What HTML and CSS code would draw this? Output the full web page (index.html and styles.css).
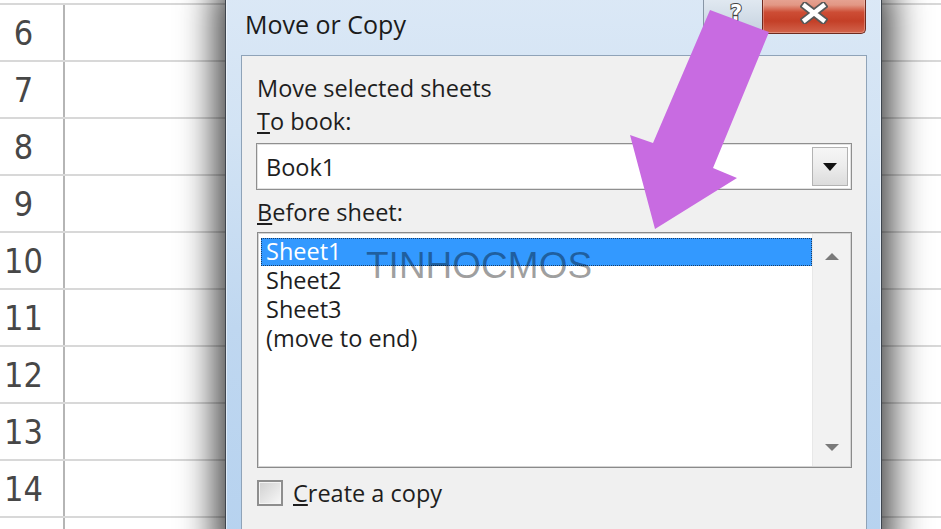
FILE: index.html
```html
<!DOCTYPE html>
<html>
<head>
<meta charset="utf-8">
<title>Move or Copy</title>
<link rel="stylesheet" href="styles.css">
</head>
<body>
<div class="sheet">
  <div class="row"><div class="hdr">6</div><div class="cells"></div></div>
  <div class="row"><div class="hdr">7</div><div class="cells"></div></div>
  <div class="row"><div class="hdr">8</div><div class="cells"></div></div>
  <div class="row"><div class="hdr">9</div><div class="cells"></div></div>
  <div class="row"><div class="hdr">10</div><div class="cells"></div></div>
  <div class="row"><div class="hdr">11</div><div class="cells"></div></div>
  <div class="row"><div class="hdr">12</div><div class="cells"></div></div>
  <div class="row"><div class="hdr">13</div><div class="cells"></div></div>
  <div class="row"><div class="hdr">14</div><div class="cells"></div></div>
  <div class="row"><div class="hdr"></div><div class="cells"></div></div>
</div>

<div class="dialog">
  <div class="titlebar">
    <span class="title">Move or Copy</span>
    <div class="caps">
      <div class="capbtn help"><span class="qmark">?</span></div>
      <div class="capbtn close">
        <svg class="xicon" width="28" height="22" viewBox="0 0 28 22">
          <path d="M5 4 L23 18 M23 4 L5 18" stroke="#585858" stroke-width="8" stroke-linecap="square"/>
          <path d="M5 4 L23 18 M23 4 L5 18" stroke="#ffffff" stroke-width="4.5" stroke-linecap="square"/>
        </svg>
      </div>
    </div>
  </div>
  <div class="client">
    <div class="label first">Move selected sheets</div>
    <div class="label lbl-book"><u>T</u>o book:</div>
    <div class="combo">
      <span class="combo-text">Book1</span>
      <span class="combo-btn">
        <svg width="16" height="10" viewBox="0 0 16 10"><path d="M1 1 H15 L8 9 Z" fill="#111"/></svg>
      </span>
    </div>
    <div class="label lbl-before"><u>B</u>efore sheet:</div>
    <div class="listbox">
      <div class="items">
        <div class="item sel">Sheet1</div>
        <div class="item">Sheet2</div>
        <div class="item">Sheet3</div>
        <div class="item">(move to end)</div>
      </div>
      <div class="vscroll">
        <svg width="16" height="9" viewBox="0 0 16 9"><path d="M1 8 L8 1 L15 8 Z" fill="#7a7a7a"/></svg>
        <svg width="16" height="9" viewBox="0 0 16 9"><path d="M1 1 L15 1 L8 8 Z" fill="#7a7a7a"/></svg>
      </div>
    </div>
    <div class="check">
      <span class="box"></span>
      <span class="check-text"><u>C</u>reate a copy</span>
    </div>
  </div>
</div>

<div class="watermark">TINHOCMOS</div>

<svg class="arrow" width="941" height="529" viewBox="0 0 941 529">
  <polygon points="710,10 769,32 713,168 737,178 655,229 630,135 653,143" fill="#c86be1"/>
</svg>
</body>
</html>
```

FILE: styles.css
```css
* { box-sizing: border-box; }
html, body { margin: 0; padding: 0; }
body {
  width: 941px;
  height: 529px;
  overflow: hidden;
  background: #ffffff;
  position: relative;
  font-family: "Open Sans", "Noto Sans", sans-serif;
  color: #1e1e1e;
}

/* spreadsheet background */
.sheet {
  margin-top: 3px;
  border-top: 2px solid #d8d8d8;
}
.row {
  display: flex;
  height: 57px;
  border-bottom: 2px solid #d8d8d8;
}
.hdr {
  width: 65px;
  flex: none;
  border-right: 2px solid #b5b5b5;
  display: flex;
  align-items: center;
  justify-content: center;
  padding-right: 16px;
  font-family: "DejaVu Sans Condensed", "DejaVu Sans", sans-serif;
  font-stretch: condensed;
  font-size: 34px;
  color: #474747;
}
.cells { flex: 1; }

/* dialog window */
.dialog {
  position: absolute;
  left: 225px;
  top: -8px;
  width: 657px;
  height: 560px;
  border: 1px solid #3e454e;
  border-radius: 6px 6px 0 0;
  background: linear-gradient(180deg, #dbe8f6 0%, #d2e3f4 25%, #bfd7f0 60%, #b6d2ef 100%);
  padding: 0 14px 0 15px;
  box-shadow: 0 0 36px 10px rgba(0, 0, 0, 0.75), inset 0 0 0 1px rgba(255, 255, 255, 0.55);
  display: flex;
  flex-direction: column;
}
.titlebar {
  height: 62px;
  flex: none;
  display: flex;
  align-items: flex-start;
}
.title {
  margin-top: 15px;
  padding-left: 4px;
  font-size: 25px;
  line-height: 32px;
  color: #1b1b1b;
}
.caps {
  margin-left: auto;
  margin-right: 1px;
  display: flex;
  align-items: flex-start;
}
.capbtn {
  display: flex;
  align-items: center;
  justify-content: center;
}
.help {
  width: 59px;
  height: 40px;
  border: 1px solid #8896a6;
  border-right: none;
  border-top: none;
  border-radius: 0 0 0 5px;
  background: linear-gradient(180deg, #e6edf4 0%, #d6e0ea 50%, #c6d2de 100%);
}
.qmark {
  font-family: "DejaVu Sans", sans-serif;
  font-weight: bold;
  font-size: 21px;
  line-height: 22px;
  color: #ffffff;
  -webkit-text-stroke: 2px #444;
  paint-order: stroke fill;
  margin-top: 0;
  margin-left: 6px;
}
.close {
  width: 104px;
  height: 41px;
  border: 1px solid #6e2a1f;
  border-top: none;
  border-radius: 0 0 5px 0;
  background: linear-gradient(180deg, #eab0a2 0%, #e29784 30%, #cd4d35 48%, #c43f27 70%, #d2644d 100%);
  box-shadow: inset 0 0 0 1px rgba(255, 220, 210, 0.35);
}
.xicon { margin-top: 0; }

/* client area */
.client {
  flex: 1;
  background: #f0f0f0;
  border: 1px solid #8fa3b8;
  padding: 17px 14px 0 14px;
  display: flex;
  flex-direction: column;
  align-items: stretch;
}
.label {
  font-size: 23.5px;
  line-height: 30px;
  padding-left: 1px;
  color: #1e1e1e;
}
.lbl-book { margin-top: 3px; }
.combo {
  margin-top: 7px;
  height: 47px;
  border: 1px solid #8f8f8f;
  box-shadow: inset 0 0 0 1px #e2e2e2;
  background: #ffffff;
  display: flex;
  align-items: center;
  padding: 3px 3px 3px 9px;
}
.combo-text {
  flex: 1;
  font-size: 23.5px;
  line-height: 30px;
}
.combo-btn {
  width: 36px;
  height: 100%;
  border: 1px solid #b3b3b3;
  background: linear-gradient(180deg, #f6f6f6 0%, #ececec 50%, #dcdcdc 100%);
  display: flex;
  align-items: center;
  justify-content: center;
}
.lbl-before { margin-top: 7px; }
.listbox {
  margin-top: 5px;
  margin-left: 1px;
  height: 236px;
  border: 1px solid #8a8a8a;
  box-shadow: inset 0 0 0 1px #d4d4d4;
  background: #ffffff;
  display: flex;
  padding: 1px;
}
.items {
  flex: 1;
  padding: 4px 0 0 2px;
}
.item {
  height: 29px;
  line-height: 27px;
  padding-left: 5px;
  font-size: 23.5px;
  color: #1e1e1e;
}
.item.sel {
  background: #3399ff;
  color: #ffffff;
  height: 28px;
  line-height: 27px;
  margin-bottom: 1px;
  outline: 1px dotted #1a3d66;
  outline-offset: -1px;
}
.vscroll {
  width: 38px;
  background: #f2f2f2;
  border-left: 1px solid #e8e8e8;
  display: flex;
  flex-direction: column;
  justify-content: space-between;
  align-items: center;
  padding: 18px 0 14px 0;
}
.check {
  margin-top: 11px;
  display: flex;
  align-items: center;
  height: 28px;
  padding-left: 1px;
}
.box {
  width: 26px;
  height: 26px;
  border: 2px solid #8e8e8e;
  background: linear-gradient(135deg, #d0d0d0 0%, #e8e8e8 60%, #f8f8f8 100%);
  box-shadow: inset 0 0 0 1px #f4f4f4;
}
.check-text {
  margin-left: 10px;
  font-size: 23.5px;
  line-height: 28px;
}

/* overlays */
.watermark {
  position: absolute;
  left: 366px;
  top: 247px;
  font-family: "Liberation Sans", Arial, sans-serif;
  font-size: 37px;
  line-height: 37px;
  color: rgba(0, 0, 0, 0.38);
}
.arrow {
  position: absolute;
  left: 0;
  top: 0;
}
```
